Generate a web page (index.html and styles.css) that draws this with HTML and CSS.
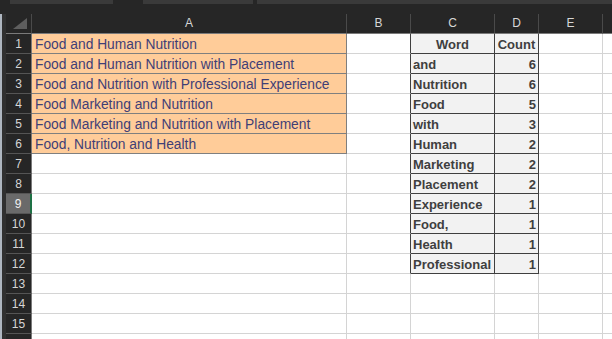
FILE: index.html
```html
<!DOCTYPE html>
<html lang="en">
<head>
  <meta charset="UTF-8">
  <title>Word Count - Sheet1</title>
  <link rel="stylesheet" href="styles.css">
</head>
<body>

  <div class="barra-topo">
    <div class="aba aba-1"></div>
    <div class="aba aba-2"></div>
    <div class="aba aba-3"></div>
  </div>

  <div class="area">
    <div class="borda-esq"></div>

    <div class="planilha">
      <!-- cabeçalho das colunas -->
      <div class="canto"><span class="triangulo"></span></div>
      <div class="col-cab">A</div>
      <div class="col-cab">B</div>
      <div class="col-cab">C</div>
      <div class="col-cab">D</div>
      <div class="col-cab">E</div>
      <div class="col-cab"></div>

      <!-- 1 -->
      <div class="lin-cab">1</div>
      <div class="cel entrada">Food and Human Nutrition</div>
      <div class="cel borda-tab"></div>
      <div class="cel saida titulo">Word</div>
      <div class="cel saida titulo">Count</div>
      <div class="cel"></div>
      <div class="cel"></div>

      <!-- 2 -->
      <div class="lin-cab">2</div>
      <div class="cel entrada">Food and Human Nutrition with Placement</div>
      <div class="cel borda-tab"></div>
      <div class="cel saida">and</div>
      <div class="cel saida num">6</div>
      <div class="cel"></div>
      <div class="cel"></div>

      <!-- 3 -->
      <div class="lin-cab">3</div>
      <div class="cel entrada">Food and Nutrition with Professional Experience</div>
      <div class="cel borda-tab"></div>
      <div class="cel saida">Nutrition</div>
      <div class="cel saida num">6</div>
      <div class="cel"></div>
      <div class="cel"></div>

      <!-- 4 -->
      <div class="lin-cab">4</div>
      <div class="cel entrada">Food Marketing and Nutrition</div>
      <div class="cel borda-tab"></div>
      <div class="cel saida">Food</div>
      <div class="cel saida num">5</div>
      <div class="cel"></div>
      <div class="cel"></div>

      <!-- 5 -->
      <div class="lin-cab">5</div>
      <div class="cel entrada">Food Marketing and Nutrition with Placement</div>
      <div class="cel borda-tab"></div>
      <div class="cel saida">with</div>
      <div class="cel saida num">3</div>
      <div class="cel"></div>
      <div class="cel"></div>

      <!-- 6 -->
      <div class="lin-cab">6</div>
      <div class="cel entrada">Food, Nutrition and Health</div>
      <div class="cel borda-tab"></div>
      <div class="cel saida">Human</div>
      <div class="cel saida num">2</div>
      <div class="cel"></div>
      <div class="cel"></div>

      <!-- 7 -->
      <div class="lin-cab">7</div>
      <div class="cel"></div>
      <div class="cel borda-tab"></div>
      <div class="cel saida">Marketing</div>
      <div class="cel saida num">2</div>
      <div class="cel"></div>
      <div class="cel"></div>

      <!-- 8 -->
      <div class="lin-cab">8</div>
      <div class="cel"></div>
      <div class="cel borda-tab"></div>
      <div class="cel saida">Placement</div>
      <div class="cel saida num">2</div>
      <div class="cel"></div>
      <div class="cel"></div>

      <!-- 9 (linha selecionada) -->
      <div class="lin-cab selecionada">9</div>
      <div class="cel"></div>
      <div class="cel borda-tab"></div>
      <div class="cel saida">Experience</div>
      <div class="cel saida num">1</div>
      <div class="cel"></div>
      <div class="cel"></div>

      <!-- 10 -->
      <div class="lin-cab">10</div>
      <div class="cel"></div>
      <div class="cel borda-tab"></div>
      <div class="cel saida">Food,</div>
      <div class="cel saida num">1</div>
      <div class="cel"></div>
      <div class="cel"></div>

      <!-- 11 -->
      <div class="lin-cab">11</div>
      <div class="cel"></div>
      <div class="cel borda-tab"></div>
      <div class="cel saida">Health</div>
      <div class="cel saida num">1</div>
      <div class="cel"></div>
      <div class="cel"></div>

      <!-- 12 -->
      <div class="lin-cab">12</div>
      <div class="cel"></div>
      <div class="cel borda-tab"></div>
      <div class="cel saida">Professional</div>
      <div class="cel saida num">1</div>
      <div class="cel"></div>
      <div class="cel"></div>

      <!-- 13 -->
      <div class="lin-cab">13</div>
      <div class="cel"></div>
      <div class="cel"></div>
      <div class="cel"></div>
      <div class="cel"></div>
      <div class="cel"></div>
      <div class="cel"></div>

      <!-- 14 -->
      <div class="lin-cab">14</div>
      <div class="cel"></div>
      <div class="cel"></div>
      <div class="cel"></div>
      <div class="cel"></div>
      <div class="cel"></div>
      <div class="cel"></div>

      <!-- 15 -->
      <div class="lin-cab">15</div>
      <div class="cel"></div>
      <div class="cel"></div>
      <div class="cel"></div>
      <div class="cel"></div>
      <div class="cel"></div>
      <div class="cel"></div>

      <!-- 16 (só a beirada aparece) -->
      <div class="lin-cab"></div>
      <div class="cel"></div>
      <div class="cel"></div>
      <div class="cel"></div>
      <div class="cel"></div>
      <div class="cel"></div>
      <div class="cel"></div>
    </div>
  </div>

</body>
</html>
```

FILE: styles.css
```css
:root {
  --fundo-escuro: #262626;
  --aba: #3a3a3a;
  --texto-cab: #d6d6d6;
  --grade: #d4d4d4;
  --entrada-fundo: #ffcc99;
  --entrada-texto: #3f3f76;
  --entrada-borda: #7f7f7f;
  --saida-fundo: #f2f2f2;
  --saida-texto: #3f3f3f;
  --saida-borda: #3f3f3f;
  --verde: #1e7145;
}

* {
  box-sizing: border-box;
}

body {
  margin: 0;
  width: 612px;
  height: 339px;
  overflow: hidden;
  background-color: var(--fundo-escuro);
  font-family: 'Liberation Sans', Arial, sans-serif;
}

/* barra de cima com as abas */
.barra-topo {
  height: 14px;
  display: flex;
  align-items: flex-start;
}

.aba {
  height: 4px;
  background-color: var(--aba);
}

.aba-1 {
  margin-left: 10px;
  width: 103px;
}

.aba-2 {
  margin-left: 30px;
  width: 110px;
}

.aba-3 {
  margin-left: 4px;
  flex: 1;
}

.area {
  display: flex;
}

.borda-esq {
  width: 6px;
  flex-shrink: 0;
  border-left: 2px solid #aeb6c0;
  background-color: #303030;
}

.planilha {
  display: grid;
  grid-template-columns: 26px 315px 64px 84px 44px 64px 10px;
  grid-auto-rows: 20px;
  background-color: white;
}

/* cabeçalhos */
.canto,
.col-cab,
.lin-cab {
  background-color: var(--fundo-escuro);
  color: var(--texto-cab);
  font-size: 12px;
  text-align: center;
}

.canto {
  position: relative;
  border-right: 1px solid #4a4a4a;
  border-bottom: 1px solid #7a7a7a;
}

.triangulo {
  position: absolute;
  right: 4px;
  bottom: 4px;
  width: 0;
  height: 0;
  border-left: 14px solid transparent;
  border-bottom: 11px solid #5e5e5e;
}

.col-cab {
  line-height: 19px;
  border-right: 1px solid #4a4a4a;
  border-bottom: 1px solid #7a7a7a;
}

.lin-cab {
  line-height: 17px;
  padding-top: 2px;
  border-right: 1px solid #7a7a7a;
  border-bottom: 1px solid #555555;
}

.lin-cab.selecionada {
  background-color: #6a6a6a;
  color: #f0f0f0;
  border-right: 2px solid var(--verde);
}

/* células */
.cel {
  font-size: 13.8px;
  line-height: 17px;
  padding: 2px 3px 0 3px;
  white-space: nowrap;
  overflow: hidden;
  border-right: 1px solid var(--grade);
  border-bottom: 1px solid var(--grade);
}

.entrada {
  background-color: var(--entrada-fundo);
  color: var(--entrada-texto);
  border-right-color: var(--entrada-borda);
  border-bottom-color: var(--entrada-borda);
}

.borda-tab {
  border-right-color: var(--saida-borda);
}

.saida {
  background-color: var(--saida-fundo);
  color: var(--saida-texto);
  font-size: 13px;
  font-weight: bold;
  padding-left: 2px;
  border-right-color: var(--saida-borda);
  border-bottom-color: var(--saida-borda);
}

.titulo {
  text-align: center;
  padding-left: 0;
  padding-right: 0;
}

.num {
  text-align: right;
  padding-right: 2px;
}
```
